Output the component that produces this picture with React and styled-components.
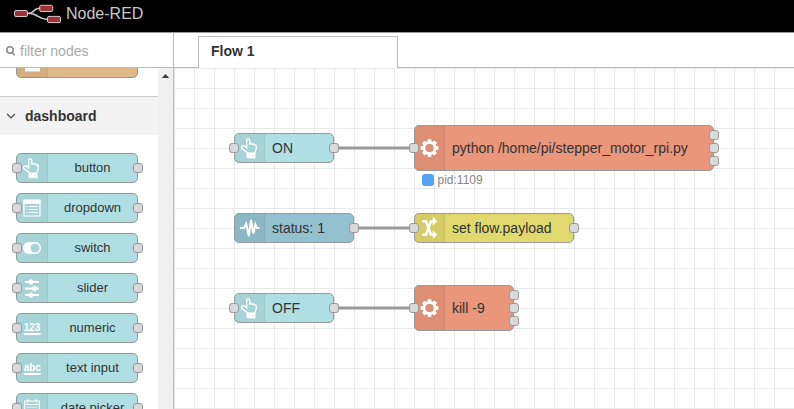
import React from "react";
import styled, { createGlobalStyle } from "styled-components";

const GlobalStyle = createGlobalStyle`
  * { box-sizing: border-box; }
  body { margin: 0; overflow: hidden; font-family: "Liberation Sans", Arial, sans-serif; font-size: 14px; line-height: 20px; color: #333; background: #fff; }
  svg { display: block; flex: none; }
`;

const Editor = styled.div`
  display: flex;
  flex-direction: column;
  height: 100vh;
`;
const Header = styled.header`
  height: 33px;
  flex: none;
  display: flex;
  align-items: flex-start;
  padding: 4px 0 0 14px;
  gap: 5px;
  background: #000;
  border-bottom: 1px solid #999;
`;
const Brand = styled.span`
  font-size: 16px;
  color: #c7c7c7;
`;
const Body = styled.div`
  flex: 1;
  min-height: 0;
  display: flex;
`;
const Palette = styled.aside`
  width: 174px;
  flex: none;
  display: flex;
  flex-direction: column;
  border-right: 1px solid #bbb;
`;
const Search = styled.div`
  height: 35px;
  flex: none;
  display: flex;
  align-items: center;
  gap: 5px;
  padding: 1px 0 0 6px;
  color: #aaa;
  border-bottom: 1px solid #bbb;
`;
const PaletteBody = styled.div`
  flex: 1;
  min-height: 0;
  display: flex;
`;
const PaletteList = styled.div`
  width: 158px;
  overflow: hidden;
`;
const Scrollbar = styled.div`
  flex: 1;
  background: #f0f0f0;
  padding: 6px 0 0 3px;
`;
const PreviousCategory = styled.div`
  height: 28px;
  display: flex;
  align-items: flex-end;
  padding: 0 20px 18px 16px;
`;
const Category = styled.div`
  height: 39px;
  display: flex;
  align-items: center;
  gap: 9px;
  padding-left: 6px;
  font-weight: bold;
  background: #f3f3f3;
  border-top: 1px solid #ccc;
`;
const PaletteNodes = styled.div`
  display: flex;
  flex-direction: column;
  gap: 10px;
  padding: 18px 20px 0 16px;
`;
const NodeBox = styled.div`
  position: relative;
  flex: none;
  display: flex;
  height: ${(p) => p.$h || 30}px;
  width: ${(p) => (p.$w ? p.$w + "px" : "100%")};
  background: ${(p) => p.$color};
  border: 1px solid #929999;
  border-radius: 5px;
`;
const CanvasNode = styled(NodeBox)`
  position: absolute;
  left: ${(p) => p.$x}px;
  top: ${(p) => p.$y}px;
  border-color: #999;
`;
const IconCell = styled.div`
  width: ${(p) => (p.$compact ? 30 : 31)}px;
  flex: none;
  display: flex;
  align-items: center;
  justify-content: center;
  background: rgba(0, 0, 0, 0.05);
  border-right: 1px solid rgba(0, 0, 0, 0.05);
  border-radius: 4px 0 0 4px;
`;
const PaletteLabel = styled.span`
  flex: 1;
  text-align: center;
  font-size: 13px;
  line-height: 28px;
`;
const CanvasLabel = styled.span`
  align-self: center;
  padding-left: 7px;
  white-space: nowrap;
`;
const Port = styled.i`
  position: absolute;
  width: 10px;
  height: 10px;
  border: 1px solid #999;
  border-radius: 3px;
  background: #d9d9d9;
  ${(p) => (p.$side === "left" ? "left" : "right")}: ${(p) => p.$out || -6}px;
  top: calc(50% - 5px + ${(p) => p.$offset || 0}px);
`;
const Workspace = styled.main`
  flex: 1;
  min-width: 0;
  display: flex;
  flex-direction: column;
`;
const TabBar = styled.nav`
  height: 35px;
  flex: none;
  display: flex;
  padding: 3px 0 0 24px;
  box-shadow: inset 0 -1px #bbb;
`;
const Tab = styled.div`
  width: 200px;
  padding: 4px 12px;
  font-weight: bold;
  background: #fff;
  border: 1px solid #bbb;
  border-bottom: none;
`;
const Canvas = styled.div`
  position: relative;
  flex: 1;
  overflow: hidden;
  background:
    linear-gradient(90deg, #e9e9e9 1px, transparent 1px) 0 0 / 20px 20px,
    linear-gradient(#e9e9e9 1px, transparent 1px) 0 0 / 20px 20px,
    #fff;
`;
const Wires = styled.svg`
  position: absolute;
  left: 0;
  top: 0;
`;
const Status = styled.div`
  position: absolute;
  left: 247.5px;
  top: 105px;
  display: flex;
  align-items: center;
  gap: 4px;
  font-size: 12px;
  line-height: 14px;
  color: #888;
`;
const StatusDot = styled.i`
  width: 12px;
  height: 12px;
  border-radius: 3px;
  background: #53a3f3;
`;
const IconText = styled.text`
  font-family: "Liberation Sans", Arial, sans-serif;
  font-weight: bold;
  font-size: 10px;
`;

const Hand = () => (
  <svg width="20" height="22" viewBox="0 0 20 22" fill="none" stroke="#fff" strokeWidth="1.4" strokeLinejoin="round">
    <path d="M6.7 11.7V3.2C6.7 1.4 9.7 1.4 9.7 3.2V7.2C10.7 6.2 11.8 6.4 12.2 7.3C13.2 6.6 14.2 7 14.5 8C15.7 7.7 16.4 8.5 16.4 9.8C16.4 12.8 15.1 13.8 14.9 16.3H7.3C7 14.4 4.5 13.9 2.2 11.9C.8 10.5 1.8 8.6 3.6 8.9C4.7 9.1 5.7 10.1 6.7 10.5" />
    <path d="M7.2 17.3H14.9V20.6H7.2Z" fill="#fff" />
    <path d="M12.7 19h1.2" stroke="#a5d2d5" strokeWidth="1" />
  </svg>
);
const Gear = () => (
  <svg width="20" height="20" viewBox="-9.5 -10 20 20" fill="#fff">
    {[0, 45, 90, 135, 180, 225, 270, 315].map((a) => (
      <path key={a} d="M-2-6L-1.7-8.9H1.7L2-6Z" transform={`rotate(${a})`} />
    ))}
    <circle r="5.6" fill="none" stroke="#fff" strokeWidth="2.6" />
  </svg>
);
const List = () => (
  <svg width="18" height="18" viewBox="0 0 18 18" fill="none" stroke="#fff">
    <path d="M1 1h16v16H1z" strokeWidth="1.2" />
    <path d="M.5 3h17" strokeWidth="4" />
    <path d="M3 7.5h1.5M6 7.5h9M3 10.5h1.5M6 10.5h9M3 13.5h1.5M6 13.5h9" strokeWidth="1.2" />
  </svg>
);
const Toggle = () => (
  <svg width="18" height="12" viewBox="0 0 18 12">
    <rect x="0" y="0" width="18" height="12" rx="6" fill="#fff" />
    <circle cx="12" cy="6" r="4.5" fill="#a7d4d8" />
  </svg>
);
const Sliders = () => (
  <svg width="14" height="20" viewBox="0 0 14 20" fill="#fff" stroke="#fff">
    <path d="M0 4h14M0 10.5h14M0 17h14" strokeWidth="1.8" />
    <circle cx="6" cy="4" r="2.2" />
    <circle cx="9.5" cy="10.5" r="2.2" />
    <circle cx="6" cy="17" r="2.2" />
  </svg>
);
const Letters = ({ children }) => (
  <svg width="20" height="18" viewBox="0 0 20 18" fill="#fff">
    <IconText x="1.7" y="12.3">{children}</IconText>
    <path d="M1.7 14h17v2h-17z" />
  </svg>
);
const Calendar = () => (
  <svg width="16" height="18" viewBox="0 0 16 18" fill="none" stroke="#fff">
    <path d="M.6 2h14.8v15H.6zM.6 5.5h14.8" strokeWidth="1.2" />
    <path d="M4 .3v3M12 .3v3" strokeWidth="1.5" />
    <path d="M3 8.5h10M3 11.5h10M3 14.5h10" strokeDasharray="1.5 1.3" />
  </svg>
);
const Pulse = () => (
  <svg width="20" height="26" viewBox="0 0 20 26" fill="none" stroke="#fff" strokeWidth="2" strokeLinejoin="miter">
    <path d="M-.5 13H4L6.2 8.5L8.8 21L11 5L13.4 18.5L15.4 9.5L16.8 13H19.5" />
  </svg>
);
const Shuffle = () => (
  <svg width="16" height="24" viewBox="0 0 16 24" fill="none" stroke="#fff" strokeWidth="2.6">
    <path d="M.5 5.2H4L9 18.7H12M.5 18.7H4L9 5.2H12" />
    <path d="M10.8 .8L15.3 5.2L10.8 9.6ZM10.8 14.3L15.3 18.7L10.8 23.1Z" fill="#fff" stroke="none" />
  </svg>
);
const Logo = () => (
  <svg width="47" height="20" viewBox="0 0 47 20">
    <path d="M14 9.3C22 9.3 18 4.3 26 4.3M14 9.3C25 9.3 23 15.3 33 15.3" fill="none" stroke="#c8c8c8" strokeWidth="1.6" />
    <g fill="#a0333a" stroke="#d8c5c5" strokeWidth="1">
      <rect x=".5" y="6.5" width="13" height="6" rx="1.5" />
      <rect x="25.7" y="1.3" width="13" height="6.2" rx="1.5" />
      <rect x="33.5" y="12.4" width="13" height="6.2" rx="1.5" />
    </g>
  </svg>
);

const paletteItems = [
  ["button", <Hand />],
  ["dropdown", <List />],
  ["switch", <Toggle />],
  ["slider", <Sliders />],
  ["numeric", <Letters>123</Letters>],
  ["text input", <Letters>abc</Letters>],
  ["date picker", <Calendar />],
];
const flowNodes = [
  { label: "ON", x: 60, y: 65, w: 100, color: "#b0dfe3", icon: <Hand />, input: true, outs: [0] },
  { label: "python /home/pi/stepper_motor_rpi.py", x: 240, y: 57, w: 300, h: 46, color: "#e9967a", icon: <Gear />, input: true, outs: [-13, 0, 13] },
  { label: "status: 1", x: 60, y: 145, w: 120, color: "#94c1d0", icon: <Pulse />, outs: [0] },
  { label: "set flow.payload", x: 240, y: 145, w: 160, color: "#e2d96e", icon: <Shuffle />, input: true, outs: [0] },
  { label: "OFF", x: 60, y: 225, w: 100, color: "#b0dfe3", icon: <Hand />, input: true, outs: [0] },
  { label: "kill -9", x: 240, y: 217, w: 100, h: 46, color: "#e9967a", icon: <Gear />, input: true, outs: [-13, 0, 13] },
];

export default function App() {
  return (
    <Editor>
      <GlobalStyle />
      <Header>
        <Logo />
        <Brand>Node-RED</Brand>
      </Header>
      <Body>
        <Palette>
          <Search>
            <svg width="9" height="10" viewBox="0 0 9 10" fill="none" stroke="#888" strokeWidth="1.5">
              <circle cx="4" cy="4" r="3.2" />
              <path d="M6.2 6.4L8.7 9.2" />
            </svg>
            filter nodes
          </Search>
          <PaletteBody>
            <PaletteList>
              <PreviousCategory>
                <NodeBox $color="#deb887">
                  <IconCell>
                    <svg width="15" height="20" viewBox="0 0 15 20"><path d="M0 0h15v18.5H0z" fill="#fff" /></svg>
                  </IconCell>
                </NodeBox>
              </PreviousCategory>
              <Category>
                <svg width="10" height="10" viewBox="0 0 10 10" fill="none" stroke="#444" strokeWidth="1.2"><path d="M1.2 3L5 6.8L8.8 3" /></svg>
                dashboard
              </Category>
              <PaletteNodes>
                {paletteItems.map(([label, icon]) => (
                  <NodeBox key={label} $color="#b0dfe3">
                    <IconCell>{icon}</IconCell>
                    <PaletteLabel>{label}</PaletteLabel>
                    <Port $side="left" $out={-5} />
                    <Port $side="right" />
                  </NodeBox>
                ))}
              </PaletteNodes>
            </PaletteList>
            <Scrollbar>
              <svg width="9" height="5" viewBox="0 0 9 5"><path d="M4.5 0L8.2 4H.8Z" fill="#404040" /></svg>
            </Scrollbar>
          </PaletteBody>
        </Palette>
        <Workspace>
          <TabBar>
            <Tab>Flow 1</Tab>
          </TabBar>
          <Canvas>
            <Wires width="620" height="341" stroke="#999" strokeWidth="3">
              <path d="M160 80H240M180 160H240M160 240H240" />
            </Wires>
            {flowNodes.map((n) => (
              <CanvasNode key={n.label} $x={n.x} $y={n.y} $w={n.w} $h={n.h} $color={n.color}>
                <IconCell $compact>{n.icon}</IconCell>
                <CanvasLabel>{n.label}</CanvasLabel>
                {n.input && <Port $side="left" />}
                {n.outs.map((o) => (
                  <Port key={o} $side="right" $offset={o} />
                ))}
              </CanvasNode>
            ))}
            <Status>
              <StatusDot />
              pid:1109
            </Status>
          </Canvas>
        </Workspace>
      </Body>
    </Editor>
  );
}
